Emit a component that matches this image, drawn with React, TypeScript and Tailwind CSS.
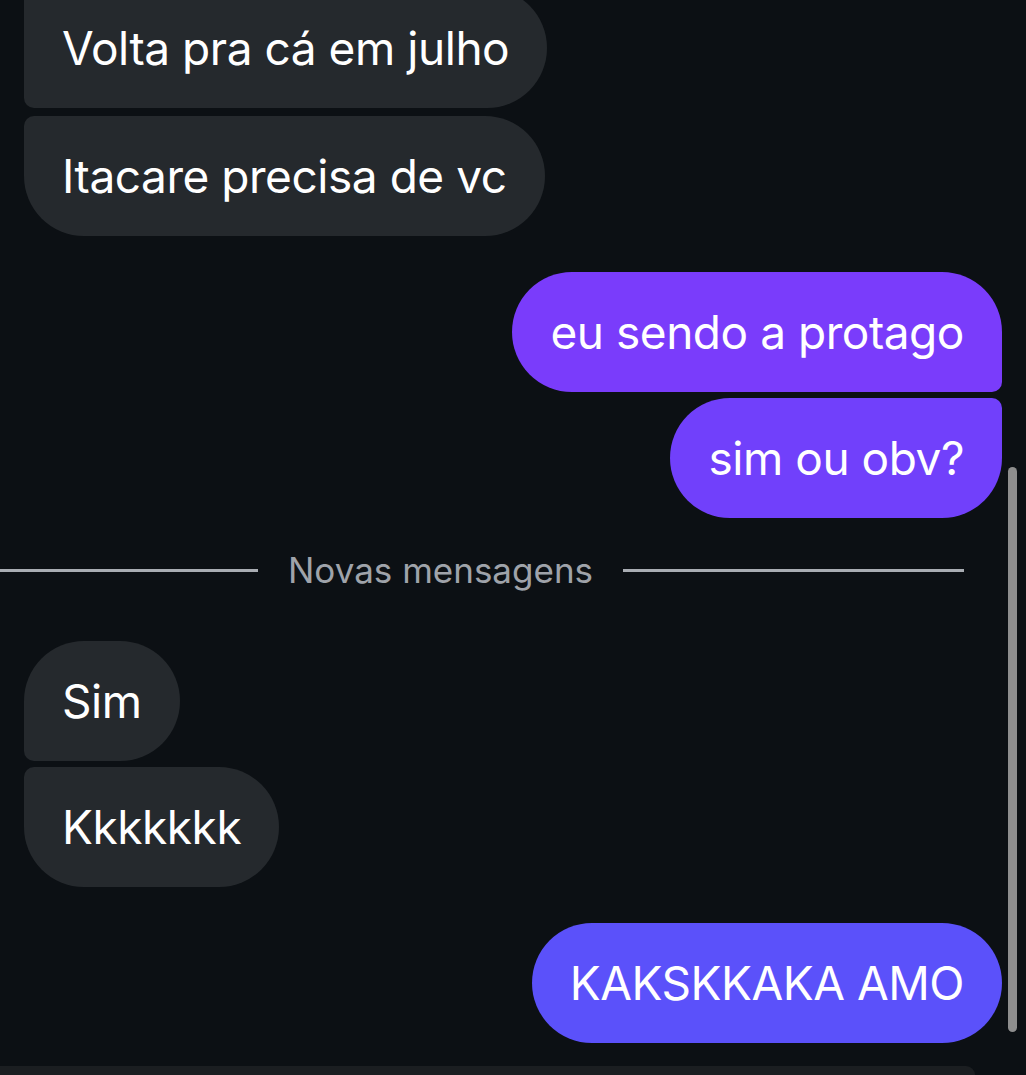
import React, { FC } from "react";

type Side = "in" | "out";

interface BubbleProps {
  side: Side;
  text: string;
  corners: string;
  color?: string;
  className?: string;
}

const Bubble: FC<BubbleProps> = ({ side, text, corners, color, className }) => {
  const base =
    side === "in"
      ? "self-start ml-[24px] bg-[#25292d]"
      : "self-end mr-[24px] " + (color || "bg-[#7a3dfd]");
  return (
    <div
      className={`${base} ${corners} ${className || ""} flex h-[120px] items-center px-[38px] text-[46px] leading-none tracking-[-0.01em] text-white`}
    >
      {text}
    </div>
  );
};

const Divider: FC = () => (
  <div className="flex h-[123px] items-center pb-[18px]">
    <div className="h-[3px] w-[258px] bg-[#a9adb3]" />
    <span className="px-[30px] text-[35px] leading-none text-[#9fa3aa]">
      Novas mensagens
    </span>
    <div className="h-[3px] w-[341px] bg-[#a9adb3]" />
  </div>
);

const App: FC = () => {
  return (
    <div className="relative flex h-[1075px] w-[1026px] flex-col overflow-hidden bg-[#0c1014] font-['Inter',sans-serif]">
      <div className="-mt-[12px] flex flex-col">
        <Bubble
          side="in"
          text="Volta pra cá em julho"
          corners="rounded-[60px] rounded-bl-[10px] rounded-tl-[10px]"
        />
        <Bubble
          side="in"
          text="Itacare precisa de vc"
          corners="rounded-[60px] rounded-tl-[10px]"
          className="mt-[8px]"
        />
        <Bubble
          side="out"
          text="eu sendo a protago"
          corners="rounded-[60px] rounded-br-[10px]"
          color="bg-[#7a3cfb]"
          className="mt-[36px]"
        />
        <Bubble
          side="out"
          text="sim ou obv?"
          corners="rounded-[60px] rounded-tr-[10px]"
          color="bg-[#7140fb]"
          className="mt-[6px]"
        />
        <Divider />
        <Bubble
          side="in"
          text="Sim"
          corners="rounded-[60px] rounded-bl-[10px]"
        />
        <Bubble
          side="in"
          text="Kkkkkkk"
          corners="rounded-[60px] rounded-tl-[10px]"
          className="mt-[6px]"
        />
        <Bubble
          side="out"
          text="KAKSKKAKA AMO"
          corners="rounded-[60px]"
          color="bg-[#5b51fa]"
          className="mt-[36px]"
        />
      </div>

      {/* composer peeking in at the bottom */}
      <div className="mt-auto h-[9px] w-[975px] rounded-tr-[40px] bg-[#1b1e21]" />

      {/* scrollbar */}
      <div className="absolute left-[1008px] top-[467px] h-[565px] w-[9px] rounded-full bg-[#8e8e8e]" />
    </div>
  );
};

export default App;
